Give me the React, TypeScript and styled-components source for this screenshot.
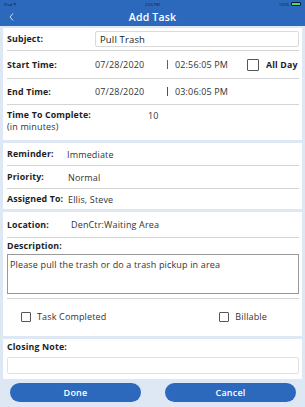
import React from "react";
import styled, { createGlobalStyle } from "styled-components";

const Global = createGlobalStyle`
  html, body { margin: 0; padding: 0; }
  body {
    width: 305px;
    height: 407px;
    overflow: hidden;
    background: #dde8f4;
    font-family: "Open Sans", "Liberation Sans", sans-serif;
    color: #1e1e1e;
  }
  * { box-sizing: border-box; }
`;

const blue = "#2c69bd";

const Page = styled.div`
  width: 305px;
  height: 407px;
  display: flex;
  flex-direction: column;
  background: #dde8f4;
`;

const Header = styled.header`
  background: ${blue};
  height: 26px;
  display: flex;
  flex-direction: column;
  color: #fff;
`;

const StatusBar = styled.div`
  height: 8px;
  display: grid;
  grid-template-columns: 1fr auto 1fr;
  align-items: center;
  padding: 0 4px;
  font-size: 4px;
  color: #0d1e33;
`;

const StatusRight = styled.div`
  justify-self: end;
  display: flex;
  align-items: center;
  gap: 2px;
`;

const Battery = styled.span`
  width: 10px;
  height: 4px;
  border: 0.5px solid #0d1e33;
  border-radius: 1px;
  background: #4cd964;
`;

const TitleBar = styled.div`
  flex: 1;
  display: grid;
  grid-template-columns: 40px 1fr 40px;
  align-items: center;
`;

const BackButton = styled.span`
  padding-left: 9px;
  display: flex;
  align-items: center;
`;

const Title = styled.h1`
  margin: 0;
  text-align: center;
  font-size: 10.5px;
  font-weight: 600;
  letter-spacing: 0.2px;
`;

const Main = styled.main`
  flex: 1;
  display: flex;
  flex-direction: column;
  gap: 3px;
  padding: 2px 3px 0;
`;

const Card = styled.section`
  background: #fff;
  padding: 0 3px 0 4px;
  display: flex;
  flex-direction: column;
`;

const Row = styled.div<{ $h: number; $line?: boolean }>`
  height: ${(p) => p.$h}px;
  display: flex;
  align-items: center;
  border-bottom: ${(p) => (p.$line ? "1px solid #d4d4d4" : "none")};
`;

const Label = styled.span<{ $w?: number }>`
  font-weight: 700;
  font-size: 8.8px;
  letter-spacing: 0.15px;
  width: ${(p) => (p.$w ? `${p.$w}px` : "auto")};
  flex: none;
  white-space: nowrap;
`;

const Value = styled.span`
  font-size: 9px;
  letter-spacing: 0.15px;
  color: #333;
  white-space: nowrap;
`;

const TextInput = styled.div`
  flex: 1;
  height: 16px;
  border: 1px solid #dadada;
  border-radius: 2px;
  display: flex;
  align-items: center;
  padding-left: 4px;
  font-size: 9.5px;
  letter-spacing: 0.15px;
  color: #222;
`;

const DateText = styled(Value)`
  width: 72px;
`;

const Bar = styled.span<{ $c: string }>`
  width: 1px;
  height: 9px;
  background: ${(p) => p.$c};
  margin-right: 7px;
`;

const TimeText = styled(Value)`
  width: 72px;
`;

const Box = styled.span<{ $s: number }>`
  width: ${(p) => p.$s}px;
  height: ${(p) => p.$s}px;
  border: 1px solid #555;
  border-radius: 1px;
  flex: none;
`;

const CheckGroup = styled.label<{ $gap: number }>`
  display: flex;
  align-items: center;
  gap: ${(p) => p.$gap}px;
`;

const TTCRow = styled.div`
  height: 35px;
  display: flex;
  align-items: flex-start;
  padding-top: 5px;
  line-height: 11px;
`;

const TTCLabel = styled.div`
  width: 141px;
  display: flex;
  flex-direction: column;
`;

const DescLabelRow = styled.div`
  height: 16px;
  display: flex;
  align-items: flex-end;
  padding-bottom: 2px;
`;

const TextArea = styled.div`
  height: 40px;
  border: 1px solid #999;
  padding: 3px 2px;
  font-size: 9px;
  letter-spacing: 0.15px;
  color: #333;
`;

const CheckRow = styled.div`
  height: 38px;
  border-top: 1px solid #d4d4d4;
  margin-top: 4px;
  display: flex;
  align-items: center;
  padding-left: 14px;
  padding-bottom: 2px;
`;

const Spacer = styled.div`
  flex: 1;
`;

const EndGap = styled.span`
  width: 32px;
`;

const NoteLabelRow = styled.div`
  height: 16px;
  display: flex;
  align-items: center;
`;

const NoteInput = styled.div`
  height: 17px;
  border: 1px solid #e2e2e2;
  border-radius: 2px;
  margin: 2px 0 5px;
`;

const Actions = styled.div`
  display: flex;
  justify-content: space-between;
  padding: 1px 6px 0 7px;
`;

const Button = styled.button`
  width: 131px;
  height: 19px;
  border: none;
  border-radius: 10px;
  background: ${blue};
  color: #fff;
  font-family: inherit;
  font-size: 9px;
  font-weight: 600;
  letter-spacing: 0.2px;
`;

export default function App() {
  return (
    <>
      <Global />
      <Page>
        <Header>
          <StatusBar>
            <span>iPad ᯤ</span>
            <span>2:56 PM</span>
            <StatusRight>
              <span>100%</span>
              <Battery />
            </StatusRight>
          </StatusBar>
          <TitleBar>
            <BackButton>
              <svg width="5" height="8" viewBox="0 0 5 8">
                <path d="M4 0.5 L1 4 L4 7.5" stroke="#cfe0f7" strokeWidth="1" fill="none" />
              </svg>
            </BackButton>
            <Title>Add Task</Title>
            <span />
          </TitleBar>
        </Header>
        <Main>
          <Card>
            <Row $h={23} $line>
              <Label $w={88}>Subject:</Label>
              <TextInput>Pull Trash</TextInput>
            </Row>
            <Row $h={28} $line>
              <Label $w={88}>Start Time:</Label>
              <DateText>07/28/2020</DateText>
              <Bar $c="#2c69bd" />
              <TimeText>02:56:05 PM</TimeText>
              <CheckGroup $gap={7}>
                <Box $s={12} />
                <Label>All Day</Label>
              </CheckGroup>
            </Row>
            <Row $h={26} $line>
              <Label $w={88}>End Time:</Label>
              <DateText>07/28/2020</DateText>
              <Bar $c="#8a3b3b" />
              <TimeText>03:06:05 PM</TimeText>
            </Row>
            <TTCRow>
              <TTCLabel>
                <Label>Time To Complete:</Label>
                <Value>(in minutes)</Value>
              </TTCLabel>
              <Value>10</Value>
            </TTCRow>
          </Card>
          <Card>
            <Row $h={23} $line>
              <Label $w={60}>Reminder:</Label>
              <Value>Immediate</Value>
            </Row>
            <Row $h={23} $line>
              <Label $w={61}>Priority:</Label>
              <Value>Normal</Value>
            </Row>
            <Row $h={20}>
              <Label $w={61}>Assigned To:</Label>
              <Value>Ellis, Steve</Value>
            </Row>
          </Card>
          <Card>
            <Row $h={26} $line>
              <Label $w={64}>Location:</Label>
              <Value>DenCtr:Waiting Area</Value>
            </Row>
            <DescLabelRow>
              <Label>Description:</Label>
            </DescLabelRow>
            <TextArea>Please pull the trash or do a trash pickup in area</TextArea>
            <CheckRow>
              <CheckGroup $gap={6}>
                <Box $s={10} />
                <Value>Task Completed</Value>
              </CheckGroup>
              <Spacer />
              <CheckGroup $gap={6}>
                <Box $s={10} />
                <Value>Billable</Value>
              </CheckGroup>
              <EndGap />
            </CheckRow>
          </Card>
          <Card>
            <NoteLabelRow>
              <Label>Closing Note:</Label>
            </NoteLabelRow>
            <NoteInput />
          </Card>
          <Actions>
            <Button>Done</Button>
            <Button>Cancel</Button>
          </Actions>
        </Main>
      </Page>
    </>
  );
}
